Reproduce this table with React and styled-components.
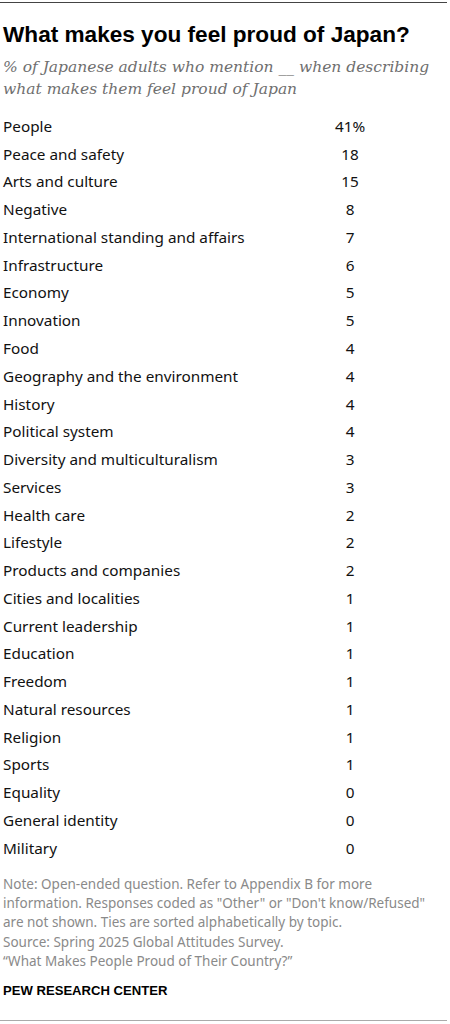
import React from "react";
import styled, { createGlobalStyle } from "styled-components";

const Global = createGlobalStyle`
  html, body { margin: 0; padding: 0; background: #fff; }
  body { font-family: "Liberation Sans", Arial, sans-serif; }
`;

const Page = styled.div`
  width: 450px;
  height: 1024px;
  box-sizing: border-box;
  padding: 2px 3px 0 3px;
  display: flex;
  flex-direction: column;
`;

const Rule = styled.div`
  height: ${(p) => p.$h}px;
  width: 447px;
  margin-left: -3px;
  background: ${(p) => p.$color};
`;

const Title = styled.h1`
  margin: 18px 0 0 0;
  font-family: "Liberation Sans", Arial, sans-serif;
  font-weight: 700;
  font-size: 22.6px;
  line-height: 28px;
  color: #000;
`;

const Subtitle = styled.p`
  margin: 7px 0 0 0;
  font-family: "DejaVu Serif", Georgia, serif;
  font-style: italic;
  font-size: 15.5px;
  line-height: 22px;
  color: #6f6f6f;
`;

const Table = styled.div`
  margin-top: 12px;
  display: flex;
  flex-direction: column;
`;

const Row = styled.div`
  display: grid;
  grid-template-columns: 317px 60px;
  height: 27.77px;
  align-items: center;
  font-family: "Noto Sans", "Liberation Sans", Arial, sans-serif;
  font-size: 15.3px;
  color: #111;
`;

const Value = styled.span`
  text-align: center;
`;

const Note = styled.p`
  margin: 13px 0 0 0;
  max-width: 434px;
  font-family: "Noto Sans", "Liberation Sans", Arial, sans-serif;
  font-size: 13.5px;
  line-height: 19.3px;
  color: #8a8a8a;
`;

const Brand = styled.div`
  margin-top: 12px;
  font-family: "Liberation Sans", Arial, sans-serif;
  font-weight: 700;
  font-size: 13.1px;
  color: #000;
`;

const Spacer = styled.div`
  flex: 1;
`;

const BottomGap = styled.div`
  height: 3px;
`;

const data = [
  ["People", "41%"],
  ["Peace and safety", "18"],
  ["Arts and culture", "15"],
  ["Negative", "8"],
  ["International standing and affairs", "7"],
  ["Infrastructure", "6"],
  ["Economy", "5"],
  ["Innovation", "5"],
  ["Food", "4"],
  ["Geography and the environment", "4"],
  ["History", "4"],
  ["Political system", "4"],
  ["Diversity and multiculturalism", "3"],
  ["Services", "3"],
  ["Health care", "2"],
  ["Lifestyle", "2"],
  ["Products and companies", "2"],
  ["Cities and localities", "1"],
  ["Current leadership", "1"],
  ["Education", "1"],
  ["Freedom", "1"],
  ["Natural resources", "1"],
  ["Religion", "1"],
  ["Sports", "1"],
  ["Equality", "0"],
  ["General identity", "0"],
  ["Military", "0"],
];

export default function App() {
  return (
    <Page>
      <Global />
      <Rule $color="#444" $h={1} />
      <Title>What makes you feel proud of Japan?</Title>
      <Subtitle>
        % of Japanese adults who mention __ when describing what makes them feel proud of Japan
      </Subtitle>
      <Table>
        {data.map(([label, v]) => (
          <Row key={label}>
            <span>{label}</span>
            <Value>{v}</Value>
          </Row>
        ))}
      </Table>
      <Note>
        Note: Open-ended question. Refer to Appendix B for more information. Responses coded as "Other" or "Don't know/Refused" are not shown. Ties are sorted alphabetically by topic.
        <br />
        Source: Spring 2025 Global Attitudes Survey.
        <br />
        “What Makes People Proud of Their Country?”
      </Note>
      <Brand>PEW RESEARCH CENTER</Brand>
      <Spacer />
      <Rule $color="#aaa" $h={1} />
      <BottomGap />
    </Page>
  );
}
